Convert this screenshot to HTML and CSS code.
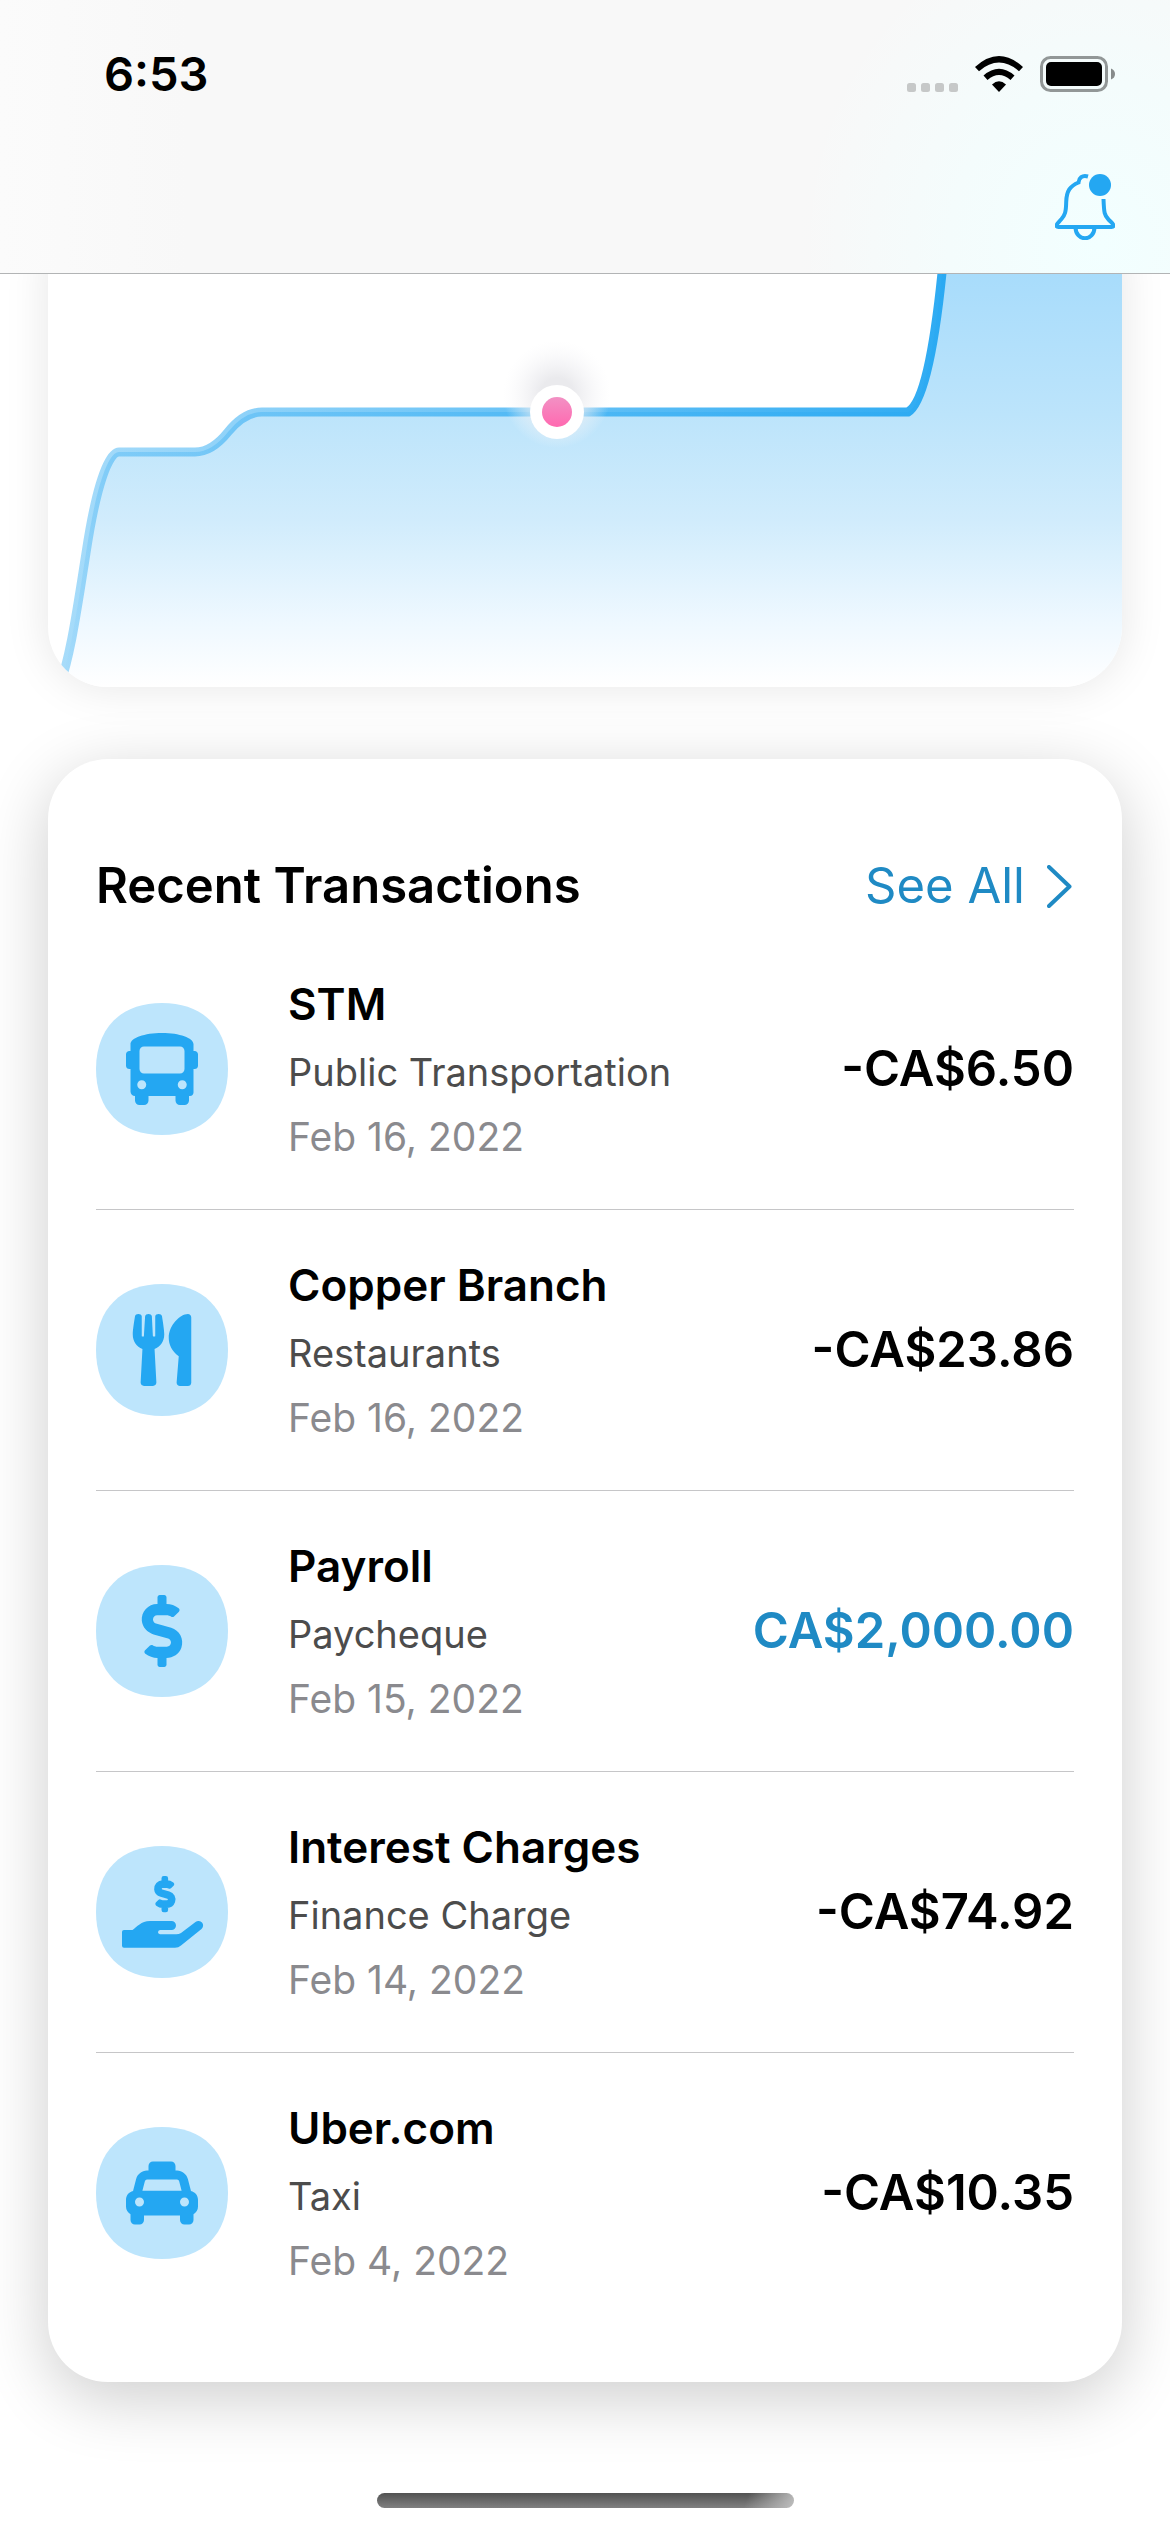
FILE: index.html
```html
<!DOCTYPE html>
<html lang="en">
<head>
<meta charset="utf-8">
<meta name="viewport" content="width=device-width, initial-scale=1">
<title>Recent Transactions</title>
<link rel="stylesheet" href="styles.css">
</head>
<body>
<svg class="symbols" aria-hidden="true">
  <symbol id="tile" viewBox="0 0 132 132"><path d="M66 0C107 0 132 25 132 66S107 132 66 132 0 107 0 66 25 0 66 0z"/></symbol>
  <symbol id="bus" viewBox="0 0 512 512"><path d="M488 128h-8V80c0-44.8-99.2-80-224-80S32 35.2 32 80v48h-8c-13.25 0-24 10.74-24 24v80c0 13.25 10.75 24 24 24h8v160c0 17.67 14.33 32 32 32v32c0 17.67 14.33 32 32 32h32c17.67 0 32-14.33 32-32v-32h192v32c0 17.67 14.33 32 32 32h32c17.67 0 32-14.33 32-32v-32h6.4c16 0 25.6-12.8 25.6-25.6V256h8c13.25 0 24-10.75 24-24v-80c0-13.26-10.75-24-24-24zM112 400c-17.67 0-32-14.33-32-32s14.33-32 32-32 32 14.33 32 32-14.33 32-32 32zm16-112c-17.67 0-32-14.33-32-32V128c0-17.67 14.33-32 32-32h256c17.67 0 32 14.33 32 32v128c0 17.67-14.33 32-32 32H128zm272 112c-17.67 0-32-14.33-32-32s14.33-32 32-32 32 14.33 32 32-14.33 32-32 32z"/></symbol>
  <symbol id="utensils" viewBox="0 0 416 512"><path d="M207.9 15.2c.8 4.7 16.1 94.5 16.1 128.8 0 52.3-27.8 89.6-68.9 104.6L168 486.7c.7 13.7-10.2 25.3-24 25.3H80c-13.7 0-24.7-11.5-24-25.3l12.9-238.1C27.7 233.6 0 196.2 0 144 0 109.6 15.3 19.9 16.1 15.2 19.3-5.1 61.4-5.4 64 16.3v141.2c1.3 3.4 15.1 3.2 16 0 1.4-25.3 7.9-139.2 8-141.8 3.3-20.8 44.7-20.8 47.9 0 .2 2.7 6.6 116.5 8 141.8.9 3.2 14.8 3.4 16 0V16.3c2.6-21.6 44.8-21.4 47.9-1.1zm119.2 285.7l-15 185.1c-1.2 14 9.9 26 23.9 26h56c13.3 0 24-10.7 24-24V24c0-13.2-10.7-24-24-24-82.5 0-221.4 178.5-64.9 300.9z"/></symbol>
  <symbol id="dollar" viewBox="0 0 288 512"><path id="dollar-shape" d="M209.2 233.4l-108-31.6C88.7 198.2 80 186.5 80 173.5c0-16.3 13.2-29.5 29.5-29.5h66.3c12.2 0 24.2 3.7 34.2 10.5 6.1 4.1 14.3 3.1 19.5-2l34.8-34c7.1-6.9 6.1-18.4-1.8-24.5C238 74.8 207.4 64.1 176 64V16c0-8.8-7.2-16-16-16h-32c-8.8 0-16 7.2-16 16v48h-2.5C45.8 64-5.4 118.7.5 183.6c4.2 46.1 39.4 83.6 83.8 96.6l102.5 30c12.5 3.7 21.2 15.3 21.2 28.3 0 16.3-13.2 29.5-29.5 29.5h-66.3C100 368 88 364.3 78 357.5c-6.1-4.1-14.3-3.1-19.5 2l-34.8 34c-7.1 6.9-6.1 18.4 1.8 24.5 24.5 19.2 55.1 29.9 86.5 30v48c0 8.8 7.2 16 16 16h32c8.8 0 16-7.2 16-16v-48.2c46.6-.9 90.3-28.6 105.7-72.7 21.5-61.6-14.6-124.8-72.5-141.7z"/></symbol>
  <symbol id="taxi" viewBox="0 0 512 512"><path d="M462 241.64l-22-84.84c-9.6-35.2-41.6-60.8-76.8-60.8H352V64c0-17.67-14.33-32-32-32H192c-17.67 0-32 14.33-32 32v32h-11.2c-35.2 0-67.2 25.6-76.8 60.8l-22 84.84C21.41 248.04 0 273.47 0 304v48c0 23.63 12.95 44.04 32 55.12V448c0 17.67 14.33 32 32 32h32c17.67 0 32-14.33 32-32v-32h256v32c0 17.67 14.33 32 32 32h32c17.67 0 32-14.33 32-32v-40.88c19.05-11.09 32-31.5 32-55.12v-48c0-30.53-21.41-55.96-50-62.36zM96 352c-17.67 0-32-14.33-32-32s14.33-32 32-32 32 14.33 32 32-14.33 32-32 32zm20.55-112l17.2-66.36c2.23-8.16 9.59-13.64 15.06-13.64h214.4c5.47 0 12.83 5.48 14.85 12.86L395.48 240h-278.93zM416 352c-17.67 0-32-14.33-32-32s14.33-32 32-32 32 14.33 32 32-14.33 32-32 32z"/></symbol>
</svg>

<header class="topbar">
  <div class="status">
    <time class="clock">6:53</time>
    <div class="indicators">
      <svg class="signal" width="51" height="9" viewBox="0 0 51 9" aria-hidden="true">
        <rect width="9" height="9" rx="2.5"/><rect x="14" width="9" height="9" rx="2.5"/><rect x="28" width="9" height="9" rx="2.5"/><rect x="42" width="9" height="9" rx="2.5"/>
      </svg>
      <svg class="wifi" width="48" height="36" viewBox="0 0 48 36" aria-hidden="true">
        <path d="M0 11Q24 -11 48 11L44 15.200Q24 -2 4 15.200z"/>
        <path d="M8.500 19.500Q24 6 39.500 19.500L35.500 24Q24 14 12.500 24z"/>
        <path d="M17 28.500Q24 22 31 28.500L24 36z"/>
      </svg>
      <svg class="battery" width="75" height="36" viewBox="0 0 75 36" aria-hidden="true">
        <rect x="1.500" y="1.500" width="65" height="33" rx="9" fill="none" stroke="#929797" stroke-width="3"/>
        <rect x="6" y="6" width="56" height="24" rx="5"/>
        <path d="M71 12.500Q75 14 75 18T71 23.500z" fill="#878b8b"/>
      </svg>
    </div>
  </div>
  <nav class="actions">
    <button class="bell" type="button" aria-label="Notifications">
      <svg width="60" height="66" viewBox="0 0 60 66" aria-hidden="true">
        <path d="M33 2.500C27 .8 24 4 23.500 8.500 15 12 11.500 17 11.200 28 11 38 10 41 6.500 45 3 49 1.500 50 1.500 51.500 1.500 53 2.500 53 3.500 53H56.500C57.500 53 58.500 53 58.500 51.500 58.500 50 57 49 53.500 45.500 49.500 41.500 49 39 48.500 25M20.500 53C20.500 68 39.500 68 39.500 53" fill="none" stroke="currentColor" stroke-width="4"/>
        <circle cx="45" cy="11" r="11" fill="currentColor"/>
      </svg>
    </button>
  </nav>
</header>

<main class="content">
  <section class="card chart" aria-label="Balance chart">
    <svg class="plot" viewBox="48 214 1074 473" preserveAspectRatio="xMidYMax slice" aria-hidden="true">
      <defs>
        <linearGradient id="area" gradientUnits="userSpaceOnUse" x1="0" y1="274" x2="0" y2="687">
          <stop offset="0" stop-color="#a8dcfb"/><stop offset=".34" stop-color="#bce4fb"/><stop offset=".6" stop-color="#d1ecfc"/><stop offset=".84" stop-color="#eef8ff"/><stop offset="1" stop-color="#fff"/>
        </linearGradient>
        <linearGradient id="line" gradientUnits="userSpaceOnUse" x1="60" y1="0" x2="940" y2="0">
          <stop offset="0" stop-color="#24a7f2" stop-opacity=".4"/><stop offset="1" stop-color="#24a7f2" stop-opacity=".95"/>
        </linearGradient>
        <linearGradient id="pink" x1="0" y1="0" x2="0" y2="1">
          <stop offset="0" stop-color="#f291c4"/><stop offset="1" stop-color="#ff69b0"/>
        </linearGradient>
        <radialGradient id="halo"><stop offset=".3" stop-color="#eaeaed"/><stop offset=".6" stop-color="#f0f0f3" stop-opacity=".6"/><stop offset="1" stop-color="#f8f8fa" stop-opacity="0"/></radialGradient>
      </defs>
      <path fill="url(#area)" d="M58 690C70 660 77 610 86 553 96 487 108 452 119 452H195Q212 452 228 432T262 412H908Q929 400 942 273L946 214H1122V687z"/>
      <path fill="none" stroke="url(#line)" stroke-width="9" d="M58 690C70 660 77 610 86 553 96 487 108 452 119 452H195Q212 452 228 432T262 412H908Q929 400 942 273L946 214"/>
      <circle cx="557" cy="394" r="54" fill="url(#halo)"/>
      <circle cx="557" cy="412" r="27" fill="#fff"/>
      <circle cx="557" cy="412" r="15" fill="url(#pink)"/>
    </svg>
  </section>

  <section class="card transactions">
    <div class="heading">
      <h1>Recent Transactions</h1>
      <a class="see-all" href="#all">See All
        <svg width="25" height="43" viewBox="0 0 25 43" aria-hidden="true"><path d="M2 2L22.500 21.500 2 41" fill="none" stroke="currentColor" stroke-width="4" stroke-linecap="round" stroke-linejoin="round"/></svg>
      </a>
    </div>
    <ul class="list">
      <li class="row">
        <svg class="icon" viewBox="0 0 132 132" aria-hidden="true"><use class="tile" href="#tile"/><use href="#bus" x="30" y="30" width="72" height="72"/></svg>
        <div class="details"><h2>STM</h2><p>Public Transportation</p><time datetime="2022-02-16">Feb 16, 2022</time></div>
        <span class="amount">-CA$6.50</span>
      </li>
      <li class="row">
        <svg class="icon" viewBox="0 0 132 132" aria-hidden="true"><use class="tile" href="#tile"/><use href="#utensils" x="30" y="30" width="72" height="72"/></svg>
        <div class="details"><h2>Copper Branch</h2><p>Restaurants</p><time datetime="2022-02-16">Feb 16, 2022</time></div>
        <span class="amount">-CA$23.86</span>
      </li>
      <li class="row">
        <svg class="icon" viewBox="0 0 132 132" aria-hidden="true"><use class="tile" href="#tile"/><use href="#dollar" x="30" y="30" width="72" height="72"/></svg>
        <div class="details"><h2>Payroll</h2><p>Paycheque</p><time datetime="2022-02-15">Feb 15, 2022</time></div>
        <span class="amount income">CA$2,000.00</span>
      </li>
      <li class="row">
        <svg class="icon" viewBox="0 0 132 132" aria-hidden="true"><use class="tile" href="#tile"/>
          <use href="#dollar-shape" transform="translate(59.300 31.200) scale(.066)" stroke="#24a7f2" stroke-width="36"/>
          <path d="M28 84H36.500C41 81 45 75 54 75H75.500A4.500 4.500 0 0 1 75.500 84H64Q62 84.500 62 86.200T64 88.300H80Q83 88.300 85 87L99.500 76A4.500 4.500 0 0 1 105.500 83L85 99.500Q82.500 101.700 79 101.700H28Q26 101.700 26 99.700V86Q26 84 28 84z"/></svg>
        <div class="details"><h2>Interest Charges</h2><p>Finance Charge</p><time datetime="2022-02-14">Feb 14, 2022</time></div>
        <span class="amount">-CA$74.92</span>
      </li>
      <li class="row">
        <svg class="icon" viewBox="0 0 132 132" aria-hidden="true"><use class="tile" href="#tile"/><use href="#taxi" x="30" y="30" width="72" height="72"/></svg>
        <div class="details"><h2>Uber.com</h2><p>Taxi</p><time datetime="2022-02-04">Feb 4, 2022</time></div>
        <span class="amount">-CA$10.35</span>
      </li>
    </ul>
  </section>
</main>
<div class="home-indicator"></div>
</body>
</html>
```
FILE: styles.css
```css
* { box-sizing: border-box; }

body {
  margin: 0;
  background: #fff;
  color: #000;
  font-family: Inter, "Liberation Sans", sans-serif;
}

h1, h2, p, ul { margin: 0; padding: 0; }

.symbols { position: absolute; width: 0; height: 0; }

.topbar {
  position: sticky;
  top: 0;
  z-index: 2;
  border-bottom: 1px solid #b2b4b5;
  background:
    radial-gradient(ellipse 300px 330px at 94% 90%, #f2ffff 0%, #f4fcfc 50%, rgba(248, 248, 248, 0) 100%),
    linear-gradient(to right, #fbfbfb 0, #f8f8f8 16%);
}

.status {
  display: flex;
  align-items: center;
  justify-content: space-between;
  height: 148px;
  padding: 0 55px 0 104px;
}

.clock { font-size: 47px; line-height: 60px; font-weight: 600; }

.indicators { display: flex; align-items: flex-end; gap: 17px; }
.signal { fill: #c6c8c8; }

.actions {
  display: flex;
  justify-content: flex-end;
  height: 125px;
  padding: 26px 55px 0;
}

.bell {
  display: flex;
  align-self: flex-start;
  padding: 0;
  border: 0;
  background: none;
  color: #24a7f2;
}

.content {
  display: flex;
  flex-direction: column;
  gap: 72px;
  padding: 0 48px;
  margin-top: -60px;
}

.card { border-radius: 60px; background: #fff; }

.chart {
  overflow: hidden;
  box-shadow: 0 0 45px rgba(0, 0, 0, .1);
}

.plot { display: block; width: 100%; height: 473px; }

.transactions {
  padding: 96px 48px 48px;
  box-shadow: 0 16px 66px rgba(0, 0, 0, .2);
}

.heading {
  display: flex;
  align-items: center;
  justify-content: space-between;
  padding-bottom: 12px;
}

h1 { font-size: 49px; line-height: 62px; font-weight: 600; }

.see-all {
  display: flex;
  align-items: center;
  gap: 22px;
  padding-right: 2px;
  color: #1f8ac4;
  font-size: 49px;
  line-height: 62px;
  text-decoration: none;
}

.list { list-style: none; }

.row {
  display: grid;
  grid-template-columns: 132px 1fr auto;
  column-gap: 60px;
  align-items: center;
  height: 281px;
  border-bottom: 1px solid #c6c6c8;
}

.row:last-child { border-bottom-color: transparent; }

.icon { width: 132px; height: 132px; fill: #24a7f2; }
.tile { fill: #bde5fc; }

h2 { font-size: 44px; line-height: 70px; font-weight: 600; }
.details p { color: #4c4c4c; font-size: 38px; line-height: 66px; }
.details time { display: block; color: #8a8a8e; font-size: 39px; line-height: 64px; }

.amount { font-size: 49px; line-height: 62px; font-weight: 600; }
.income { color: #1f8ac4; }

.home-indicator {
  width: 417px;
  height: 15px;
  margin: 111px auto 24px;
  border-radius: 8px;
  background:
    linear-gradient(110deg, rgba(190, 190, 190, 0) 88%, #bebebe 100%),
    linear-gradient(#525252, #808080);
}
```
